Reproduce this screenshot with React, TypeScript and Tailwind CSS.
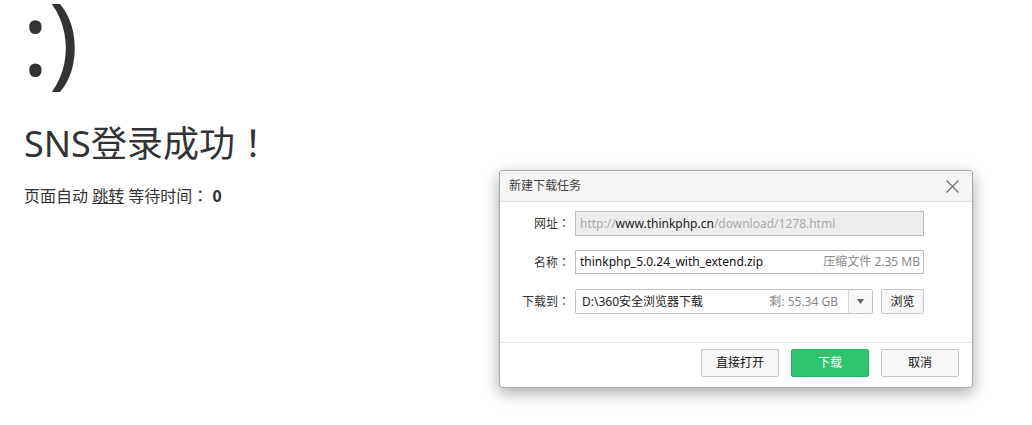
import React from "react";

const FONT = '"Noto Sans", "Noto Sans CJK SC", sans-serif';
const JP = '"Noto Sans CJK JP", sans-serif';

function P({ c }: { c: string }) {
  return <span style={{ fontFamily: JP }}>{c}</span>;
}

export default function App() {
  return (
    <div
      className="relative w-[1032px] h-[425px] overflow-hidden bg-white text-[#333]"
      style={{ fontFamily: FONT }}
    >
      <div className="px-6">
        <h1 className="-mt-[23px] -ml-[2px] text-[100px] leading-[120px] font-normal mb-3">:)</h1>
        <p className="text-[36px] leading-[64.8px]">
          SNS登录成功<P c="！" />
        </p>
        <p className="pt-[8px] text-[16px] leading-[20px]">
          页面自动 <a className="underline text-[#333]">跳转</a> 等待时间<P c="：" /> <b>0</b>
        </p>
      </div>

      {/* Dialog */}
      <div className="absolute left-[499px] top-[170px] w-[474px] border border-[#a9a9a9] rounded-[3px] bg-white shadow-[0_5px_16px_rgba(0,0,0,0.35)] text-[12px] text-[#333]">
        <div className="h-[31px] box-border bg-[#f5f5f5] border-b border-[#e2e2e2] flex items-center justify-between pl-[9px] pr-[13px] rounded-t-[3px]">
          <span className="text-[#444]">新建下载任务</span>
          <svg width="13" height="13" viewBox="0 0 13 13">
            <path d="M0.5 0.5 L12.5 12.5 M12.5 0.5 L0.5 12.5" stroke="#6b6b6b" strokeWidth="1.2" fill="none" />
          </svg>
        </div>

        <div className="pt-[9px]">
          <div className="flex items-center h-[25px]">
            <div className="w-[70px] text-right">
              网址<P c="：" />
            </div>
            <div className="ml-[5px] w-[349px] h-[25px] box-border border border-[#bdbdbd] bg-[#ededed] flex items-center pl-[4px] whitespace-nowrap">
              <span className="text-[#aaa]">http://</span>
              <span className="text-[#222]">www.thinkphp.cn</span>
              <span className="text-[#aaa]">/download/1278.html</span>
            </div>
          </div>

          <div className="flex items-center h-[24px] mt-[14px]">
            <div className="w-[70px] text-right">
              名称<P c="：" />
            </div>
            <div className="ml-[5px] w-[349px] h-[24px] box-border border border-[#bdbdbd] bg-white flex items-center justify-between pl-[4px] pr-[3px] whitespace-nowrap">
              <span className="text-[#111]">thinkphp_5.0.24_with_extend.zip</span>
              <span className="text-[#888]">压缩文件 2.35 MB</span>
            </div>
          </div>

          <div className="flex items-center h-[25px] mt-[15px]">
            <div className="w-[70px] text-right">
              下载到<P c="：" />
            </div>
            <div className="ml-[5px] w-[298px] h-[25px] box-border border border-[#c4c4c4] bg-white flex items-center whitespace-nowrap rounded-[2px]">
              <div className="flex-1 flex items-center justify-between pl-[6px] pr-[10px]">
                <span className="text-[#222]">D:\360安全浏览器下载</span>
                <span className="text-[#888]">剩: 55.34 GB</span>
              </div>
              <div className="w-[24px] h-full border-l border-[#d4d4d4] bg-[#f7f7f7] flex items-center justify-center">
                <svg width="7" height="5" viewBox="0 0 7 5">
                  <path d="M0 0 L7 0 L3.5 5 Z" fill="#666" />
                </svg>
              </div>
            </div>
            <button className="ml-[8px] w-[43px] h-[25px] box-border border border-[#c8c8c8] bg-[#f7f7f7] rounded-[2px] text-[12px] text-[#111] flex items-center justify-center">
              浏览
            </button>
          </div>
        </div>

        <div className="mt-[28px] border-t border-[#e4e4e4] flex justify-end gap-[12px] pt-[6px] pb-[10px] pr-[13px]">
          <button className="w-[78px] h-[28px] box-border border border-[#c8c8c8] bg-[#f7f7f7] rounded-[2px] text-[12px] text-[#111] flex items-center justify-center">
            直接打开
          </button>
          <button className="w-[78px] h-[28px] box-border border border-[#25b25f] bg-[#2ec46d] rounded-[2px] text-[12px] text-white flex items-center justify-center">
            下载
          </button>
          <button className="w-[78px] h-[28px] box-border border border-[#c8c8c8] bg-[#f7f7f7] rounded-[2px] text-[12px] text-[#111] flex items-center justify-center">
            取消
          </button>
        </div>
      </div>
    </div>
  );
}
